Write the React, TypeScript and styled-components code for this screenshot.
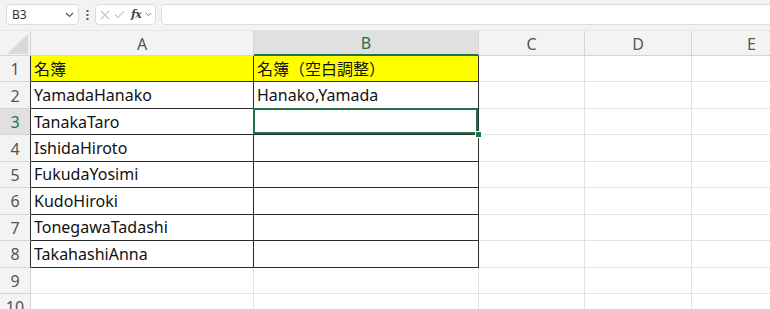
import React from "react";
import styled, { createGlobalStyle, css } from "styled-components";

const GREEN = "#217346";
const GRID = "#e3e3e3";
const HEADLINE = "#d4d4d4";
const DARK = "#2b2b2b";

const Global = createGlobalStyle`
  html, body { margin: 0; padding: 0; background: #ffffff; }
  body { font-family: "Noto Sans", "Noto Sans CJK JP", sans-serif; }
`;

const Frame = styled.div`
  width: 770px;
  height: 309px;
  overflow: hidden;
  background: #ffffff;
  display: flex;
  flex-direction: column;
`;

const Toolbar = styled.div`
  height: 31px;
  flex: 0 0 31px;
  box-sizing: border-box;
  background: #f3f3f3;
  border-bottom: 1px solid #e6e6e6;
  display: flex;
  align-items: flex-start;
  padding: 4px 0 0 6px;
`;

const NameBox = styled.div`
  width: 73px;
  height: 21px;
  box-sizing: border-box;
  background: #ffffff;
  border: 1px solid #dcdcdc;
  border-radius: 4px;
  display: flex;
  align-items: center;
  justify-content: space-between;
  padding: 0 4px 0 5px;
  font-size: 12px;
  color: #333;
`;

const DotsSlot = styled.div`
  width: 16px;
  height: 21px;
  display: flex;
  align-items: center;
  justify-content: center;
`;

const FxBox = styled.div`
  width: 61px;
  height: 21px;
  box-sizing: border-box;
  background: #ffffff;
  border: 1px solid #dcdcdc;
  border-radius: 4px;
  display: flex;
  align-items: center;
  gap: 4px;
  padding: 0 0 0 4px;
`;

const FxLabel = styled.span`
  font-family: "DejaVu Serif", "Liberation Serif", serif;
  font-style: italic;
  font-weight: bold;
  font-size: 11px;
  color: #444;
  margin-left: 2px;
  letter-spacing: -0.5px;
`;

const FormulaInput = styled.div`
  flex: 1;
  height: 21px;
  margin-left: 5px;
  margin-right: -6px;
  box-sizing: border-box;
  background: #ffffff;
  border: 1px solid #dcdcdc;
  border-radius: 4px;
`;

const Sheet = styled.div`
  display: grid;
  grid-template-columns: 31px 223px 225px 106px 107px 120px;
  grid-template-rows: 25px repeat(10, 26.45px);
  font-size: 16px;
`;

const Cell = styled.div<{ $right?: string; $bottom?: string; $fill?: string }>`
  position: relative;
  box-sizing: border-box;
  border-right: 1px solid ${(p) => p.$right ?? GRID};
  border-bottom: 1px solid ${(p) => p.$bottom ?? GRID};
  background: ${(p) => p.$fill ?? "#ffffff"};
  padding: 0 3px;
  display: flex;
  align-items: center;
  white-space: nowrap;
  overflow: visible;
  color: #111;
  line-height: 1;
`;

const SelectedCell = styled(Cell)`
  &::after {
    content: "";
    position: absolute;
    top: -1px;
    left: -1px;
    right: 0;
    bottom: 0;
    border: 2px solid ${GREEN};
    pointer-events: none;
  }
`;

const FillHandle = styled.span`
  position: absolute;
  right: -3px;
  bottom: -3px;
  width: 5px;
  height: 5px;
  background: ${GREEN};
  border: 1px solid #ffffff;
  box-sizing: content-box;
  z-index: 2;
  margin: -1px;
`;

const ColHead = styled.div<{ $active?: boolean }>`
  box-sizing: border-box;
  background: ${(p) => (p.$active ? "#e0e0e0" : "#f3f3f3")};
  border-right: 1px solid ${HEADLINE};
  ${(p) =>
    p.$active
      ? css`border-bottom: 2px solid ${GREEN};`
      : css`border-bottom: 1px solid ${HEADLINE};`}
  display: flex;
  align-items: center;
  justify-content: center;
  color: ${(p) => (p.$active ? GREEN : "#555")};
  font-size: 16px;
  padding-top: 1px;
`;

const Corner = styled.div`
  box-sizing: border-box;
  background: #f3f3f3;
  border-right: 1px solid ${HEADLINE};
  border-bottom: 1px solid ${HEADLINE};
  display: flex;
  align-items: flex-end;
  justify-content: flex-end;
  padding: 0 2px 1px 0;
`;

const RowHead = styled.div<{ $active?: boolean; $edge?: string }>`
  box-sizing: border-box;
  background: ${(p) => (p.$active ? "#e0e0e0" : "#f3f3f3")};
  border-right: 1px solid ${(p) => p.$edge ?? HEADLINE};
  border-bottom: 1px solid ${HEADLINE};
  display: flex;
  align-items: center;
  justify-content: center;
  color: ${(p) => (p.$active ? GREEN : "#555")};
  font-size: 16px;
  padding-top: 1px;
`;

const Chevron = ({ w = 9 }: { w?: number }) => (
  <svg width={w} height="6" viewBox="0 0 9 6">
    <path d="M1 1 L4.5 4.5 L8 1" fill="none" stroke="#555" strokeWidth="1.2" />
  </svg>
);

const cols = ["A", "B", "C", "D", "E"];
const colA = [
  "名簿",
  "YamadaHanako",
  "TanakaTaro",
  "IshidaHiroto",
  "FukudaYosimi",
  "KudoHiroki",
  "TonegawaTadashi",
  "TakahashiAnna",
];
const colB = ["名簿（空白調整）", "Hanako,Yamada", "", "", "", "", "", ""];

export default function App() {
  const rows = Array.from({ length: 10 }, (_, i) => i + 1);
  return (
    <Frame>
      <Global />
      <Toolbar>
        <NameBox>
          <span>B3</span>
          <Chevron />
        </NameBox>
        <DotsSlot>
          <svg width="3" height="10" viewBox="0 0 3 10">
            <rect x="0.5" y="0" width="2" height="2" fill="#555" />
            <rect x="0.5" y="4" width="2" height="2" fill="#555" />
            <rect x="0.5" y="8" width="2" height="2" fill="#555" />
          </svg>
        </DotsSlot>
        <FxBox>
          <svg width="10" height="10" viewBox="0 0 10 10">
            <path d="M1 1 L9 9 M9 1 L1 9" stroke="#c4c4c4" strokeWidth="1.1" fill="none" />
          </svg>
          <svg width="11" height="9" viewBox="0 0 11 9">
            <path d="M1 4.5 L4 7.5 L10 1" stroke="#c4c4c4" strokeWidth="1.1" fill="none" />
          </svg>
          <FxLabel>fx</FxLabel>
          <svg width="7" height="5" viewBox="0 0 9 6">
            <path d="M1 1 L4.5 4.5 L8 1" fill="none" stroke="#777" strokeWidth="1.2" />
          </svg>
        </FxBox>
        <FormulaInput />
      </Toolbar>
      <Sheet>
        <Corner>
          <svg width="21" height="20" viewBox="0 0 21 20">
            <path d="M21 0 L21 20 L0 20 Z" fill="#d9d9d9" />
          </svg>
        </Corner>
        {cols.map((c) => (
          <ColHead key={c} $active={c === "B"}>
            {c}
          </ColHead>
        ))}
        {rows.map((r) => {
          const inTable = r <= 8;
          const a = colA[r - 1] ?? "";
          const b = colB[r - 1] ?? "";
          const fill = r === 1 ? "#ffff00" : undefined;
          const tableBorder = inTable ? DARK : GRID;
          return (
            <React.Fragment key={r}>
              <RowHead $active={r === 3} $edge={inTable ? DARK : HEADLINE}>
                {r}
              </RowHead>
              <Cell $right={tableBorder} $bottom={tableBorder} $fill={fill}>
                {a}
              </Cell>
              {r === 3 ? (
                <SelectedCell $right={tableBorder} $bottom={tableBorder}>
                  <FillHandle />
                </SelectedCell>
              ) : (
                <Cell $right={tableBorder} $bottom={tableBorder} $fill={fill}>
                  {b}
                </Cell>
              )}
              <Cell />
              <Cell />
              <Cell />
            </React.Fragment>
          );
        })}
      </Sheet>
    </Frame>
  );
}
